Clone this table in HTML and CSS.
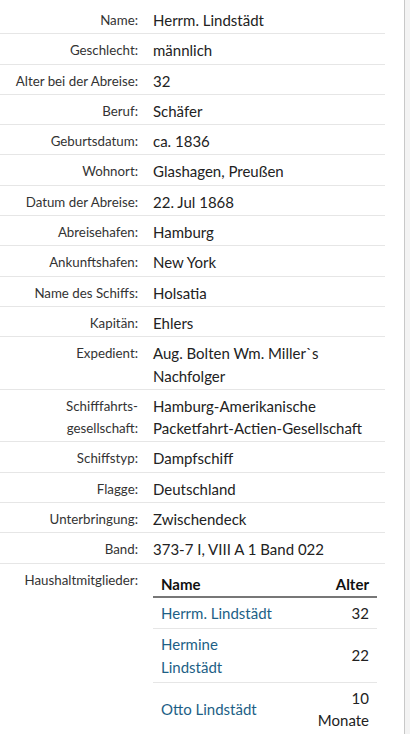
FILE: index.html
```html
<!DOCTYPE html>
<html lang="de">
<head>
  <meta charset="UTF-8">
  <title>Passagier</title>
  <link rel="stylesheet" href="styles.css">
</head>
<body>

  <div class="page">
    <table class="details">
      <tbody>
        <tr><th>Name:</th><td>Herrm. Lindstädt</td></tr>
        <tr><th>Geschlecht:</th><td>männlich</td></tr>
        <tr><th>Alter bei der Abreise:</th><td>32</td></tr>
        <tr><th>Beruf:</th><td>Schäfer</td></tr>
        <tr><th>Geburtsdatum:</th><td>ca. 1836</td></tr>
        <tr><th>Wohnort:</th><td>Glashagen, Preußen</td></tr>
        <tr><th>Datum der Abreise:</th><td>22. Jul 1868</td></tr>
        <tr><th>Abreisehafen:</th><td>Hamburg</td></tr>
        <tr><th>Ankunftshafen:</th><td>New York</td></tr>
        <tr><th>Name des Schiffs:</th><td>Holsatia</td></tr>
        <tr><th>Kapitän:</th><td>Ehlers</td></tr>
        <tr><th>Expedient:</th><td>Aug. Bolten Wm. Miller`s Nachfolger</td></tr>
        <tr><th>Schifffahrts-<br>gesellschaft:</th><td>Hamburg-Amerikanische Packetfahrt-Actien-Gesellschaft</td></tr>
        <tr><th>Schiffstyp:</th><td>Dampfschiff</td></tr>
        <tr><th>Flagge:</th><td>Deutschland</td></tr>
        <tr><th>Unterbringung:</th><td>Zwischendeck</td></tr>
        <tr><th>Band:</th><td>373-7 I, VIII A 1 Band 022</td></tr>
        <tr class="last">
          <th>Haushaltmitglieder:</th>
          <td>
            <table class="members">
              <thead>
                <tr><th class="name">Name</th><th class="age">Alter</th></tr>
              </thead>
              <tbody>
                <tr><td><a href="#">Herrm. Lindstädt</a></td><td class="age">32</td></tr>
                <tr><td><a href="#">Hermine Lindstädt</a></td><td class="age">22</td></tr>
                <tr><td><a href="#">Otto Lindstädt</a></td><td class="age">10 Monate</td></tr>
              </tbody>
            </table>
          </td>
        </tr>
      </tbody>
    </table>
  </div>

</body>
</html>
```

FILE: styles.css
```css
html, body {
  margin: 0;
  padding: 0;
}
body {
  background-color: #f3f3f3;
  color: #222;
  font-family: Lato, "Noto Sans", sans-serif;
}
.page {
  width: 405px;
  min-height: 734px;
  background-color: white;
  border-right: 1px solid #c8c8c8;
  box-sizing: border-box;
  padding-top: 4px;
}
.details {
  width: 385px;
  border-collapse: collapse;
}
.details > tbody > tr > th,
.details > tbody > tr > td {
  border-bottom: 1px solid #e6e6e6;
  padding: 5px 8px 2px 8px;
  vertical-align: top;
}
.details > tbody > tr.last > th,
.details > tbody > tr.last > td {
  border-bottom: none;
}
.details > tbody > tr > th {
  width: 130px;
  text-align: right;
  font-weight: normal;
  font-size: 13.3px;
  line-height: 22.3px;
  color: #333;
  padding-right: 7px;
}
.details > tbody > tr > td {
  font-size: 15px;
  line-height: 22.3px;
  padding-left: 8px;
  padding-right: 0;
}
.details > tbody > tr.last > td {
  padding-top: 7px;
}
.members {
  width: 224px;
  border-collapse: collapse;
  table-layout: fixed;
}
.members th {
  text-align: left;
  font-weight: bold;
  color: #111;
  border-bottom: 2px solid #777;
  padding: 2px 8px 1px 8px;
}
.members td {
  padding: 4px 8px 4px 8px;
  border-bottom: 1px solid #e6e6e6;
  vertical-align: middle;
}
.members .name {
  width: 116px;
}
.members .age {
  text-align: right;
  padding-left: 28px;
}
.members a {
  color: #1d5f86;
  text-decoration: none;
}
```
